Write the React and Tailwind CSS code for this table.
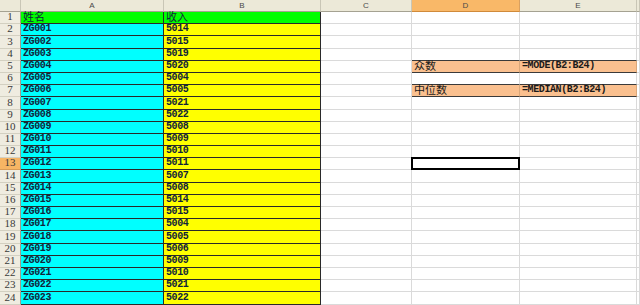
import React from 'react';

const names = Array.from({ length: 23 }, (_, i) => 'ZG' + String(i + 1).padStart(3, '0'));
const incomes = [
  5014, 5015, 5019, 5020, 5004, 5005, 5021, 5022, 5008, 5009, 5010, 5011,
  5007, 5008, 5014, 5015, 5004, 5005, 5006, 5009, 5010, 5021, 5022,
];

const mono = "font-['Liberation_Mono',monospace] text-[10px] tracking-[-0.4px]";
const cjk = "font-['Noto_Sans_CJK_SC',sans-serif] text-[11px]";

const cols = ['A', 'B', 'C', 'D', 'E', ''];

// classes for a body cell, by column index (1..6) and row number (1..24)
const cellClass = (c, r) => {
  if (c === 1 || c === 2) {
    const bg = r === 1 ? 'bg-[#00ff00]' : c === 1 ? 'bg-[#00ffff]' : 'bg-[#ffff00]';
    return `${bg} border-b border-r border-[#2a2a2a] text-[#10243a]`;
  }
  if (c === 4 || c === 5) {
    const orange = r === 5 || r === 7;
    const darkBottom = r >= 4 && r <= 7;
    return `${orange ? 'bg-[#fac08f]' : 'bg-white'} border-b border-r ${
      darkBottom ? 'border-b-[#3a3a3a]' : 'border-b-[#dadada]'
    } ${orange ? 'border-r-[#d9a77a]' : 'border-r-[#dadada]'} text-[#1a1a1a]`;
  }
  return 'bg-white border-b border-r border-[#dadada]';
};

const cellText = (c, r) => {
  if (r === 1 && c === 1) return <span className={cjk}>姓名</span>;
  if (r === 1 && c === 2) return <span className={cjk}>收入</span>;
  if (c === 1) return <span className={`${mono} font-bold`}>{names[r - 2]}</span>;
  if (c === 2) return <span className={`${mono} font-bold`}>{incomes[r - 2]}</span>;
  if (c === 4 && r === 5) return <span className={cjk}>众数</span>;
  if (c === 4 && r === 7) return <span className={cjk}>中位数</span>;
  if (c === 5 && r === 5) return <span className={`${mono} font-bold`}>=MODE(B2:B24)</span>;
  if (c === 5 && r === 7) return <span className={`${mono} font-bold`}>=MEDIAN(B2:B24)</span>;
  return null;
};

const App = () => {
  const rows = Array.from({ length: 24 }, (_, i) => i + 1);

  return (
    <div className="w-[640px] h-[305px] overflow-hidden bg-white">
      <div className="grid grid-cols-[21px_143px_157px_91px_108px_117px_1fr] grid-rows-[12px_repeat(24,12.2px)]">
        {/* Column headers */}
        <div className="bg-[#ece9d8] border-b border-r border-b-[#a5a292] border-r-[#c9c6b6]" />
        {cols.map((h) => (
          <div
            key={h || 'F'}
            className={`flex items-center justify-center border-b border-r font-['Liberation_Sans',sans-serif] text-[8px] leading-none text-[#4a4a4a] ${
              h === 'D'
                ? 'bg-[#f9b868] border-b-[#d08a3a] border-r-[#d9a060]'
                : 'bg-[#ece9d8] border-b-[#a5a292] border-r-[#c9c6b6]'
            }`}
          >
            {h}
          </div>
        ))}

        {/* Body */}
        {rows.map((r) => (
          <React.Fragment key={r}>
            <div
              className={`flex items-end justify-center pb-[1px] border-b border-r border-r-[#9f9c8c] font-['Liberation_Serif',serif] text-[11px] leading-none text-[#3a3a3a] ${
                r === 13 ? 'bg-[#f7b564] border-b-[#d99b55]' : 'bg-[#efece0] border-b-[#d3d0c1]'
              }`}
            >
              {r}
            </div>
            {[1, 2, 3, 4, 5, 6].map((c) => (
              <div
                key={c}
                className={`relative flex items-end pl-[2px] pb-[1px] leading-none whitespace-nowrap ${cellClass(c, r)}`}
              >
                {cellText(c, r)}
                {c === 4 && r === 13 && (
                  <>
                    <div className="absolute -left-[1px] -top-[1px] right-[-1px] bottom-[-1px] border-2 border-black" />
                    <div className="absolute right-[-3px] bottom-[-3px] w-[4px] h-[4px] bg-black" />
                  </>
                )}
              </div>
            ))}
          </React.Fragment>
        ))}
      </div>
    </div>
  );
};

export default App;
